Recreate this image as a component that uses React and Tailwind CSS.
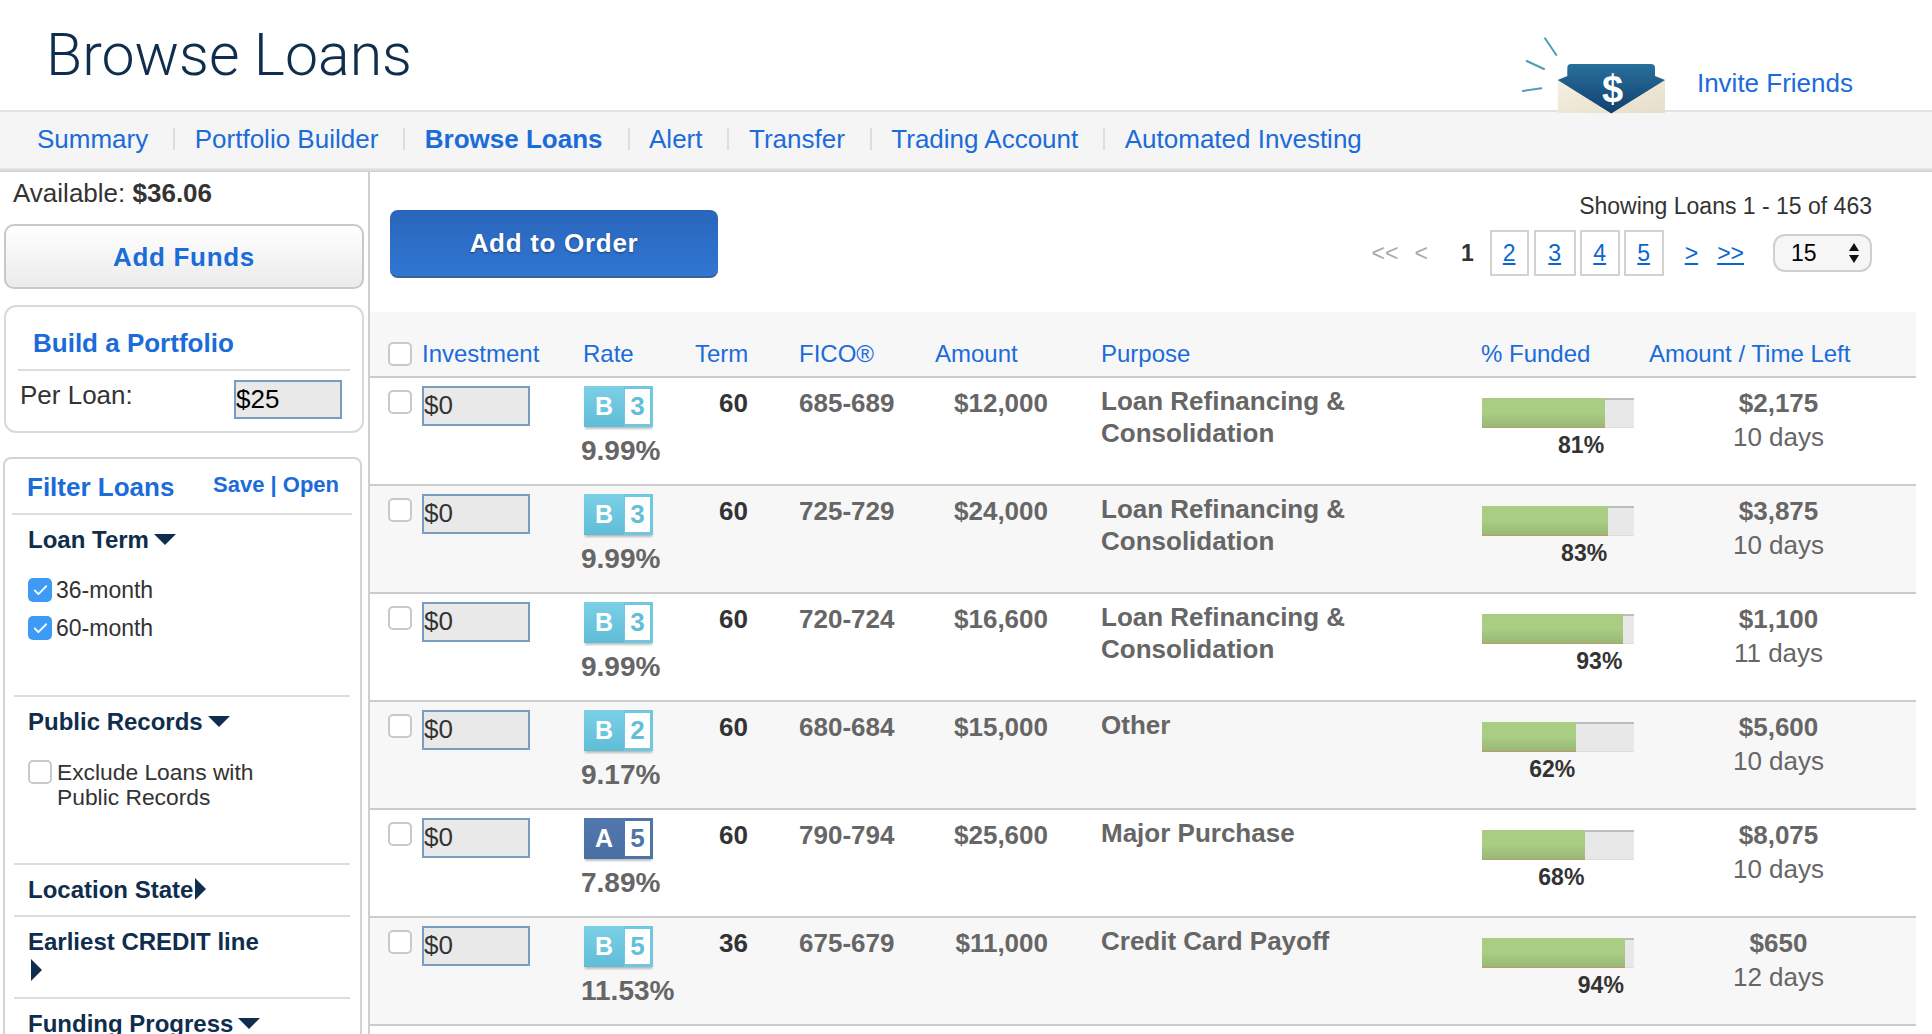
import React from "react";
import { Check } from "lucide-react";

const loans = [
  { grade: "B", sub: 3, rate: "9.99%", term: 60, fico: "685-689", amount: "$12,000", purpose: ["Loan Refinancing &", "Consolidation"], funded: 81, left: "$2,175", time: "10 days" },
  { grade: "B", sub: 3, rate: "9.99%", term: 60, fico: "725-729", amount: "$24,000", purpose: ["Loan Refinancing &", "Consolidation"], funded: 83, left: "$3,875", time: "10 days" },
  { grade: "B", sub: 3, rate: "9.99%", term: 60, fico: "720-724", amount: "$16,600", purpose: ["Loan Refinancing &", "Consolidation"], funded: 93, left: "$1,100", time: "11 days" },
  { grade: "B", sub: 2, rate: "9.17%", term: 60, fico: "680-684", amount: "$15,000", purpose: ["Other"], funded: 62, left: "$5,600", time: "10 days" },
  { grade: "A", sub: 5, rate: "7.89%", term: 60, fico: "790-794", amount: "$25,600", purpose: ["Major Purchase"], funded: 68, left: "$8,075", time: "10 days" },
  { grade: "B", sub: 5, rate: "11.53%", term: 36, fico: "675-679", amount: "$11,000", purpose: ["Credit Card Payoff"], funded: 94, left: "$650", time: "12 days" },
];

const navItems = ["Summary", "Portfolio Builder", "Browse Loans", "Alert", "Transfer", "Trading Account", "Automated Investing"];

const rowGrid = "grid grid-cols-[34px_159px_114px_104px_136px_166px_380px_168px_1fr] pl-[18px]";

function Box({ checked }) {
  if (checked) {
    return (
      <div className="w-6 h-6 shrink-0 rounded-[5px] bg-[#3d9bf6] flex items-center justify-center">
        <Check size={17} strokeWidth={2.5} className="text-white" />
      </div>
    );
  }
  return <div className="w-6 h-6 shrink-0 rounded-[5px] border-2 border-[#c9c9c9] bg-white" />;
}

function CaretDown() {
  return <span className="inline-block ml-[5px] mb-[5px] w-0 h-0 border-l-[11px] border-r-[11px] border-t-[11px] border-l-transparent border-r-transparent border-t-[#0f2d4d] align-middle" />;
}

function CaretRight({ className }) {
  return <span className={`inline-block w-0 h-0 border-t-[11px] border-b-[11px] border-l-[11px] border-t-transparent border-b-transparent border-l-[#0f2d4d] ${className}`} />;
}

function GradeBadge({ grade, sub }) {
  const isA = grade === "A";
  return (
    <div className="flex w-[69px] h-[41px] ml-[3px] shadow-[0_3px_2px_-1px_rgba(0,0,0,0.25)]">
      <div className={`w-[40px] flex items-center justify-center text-white font-bold text-[25px] ${isA ? "bg-gradient-to-b from-[#5177ad] to-[#4a6fa3]" : "bg-gradient-to-b from-[#7bd0e6] to-[#5fbdd7]"}`}>
        {grade}
      </div>
      <div className={`w-[29px] border-[3px] border-l-[1px] bg-white flex items-center justify-center font-bold text-[26px] ${isA ? "border-[#4f74a8] text-[#4f74a8]" : "border-[#6fc8e0] text-[#62bfd9]"}`}>
        {sub}
      </div>
    </div>
  );
}

function LoanRow({ loan, shaded }) {
  return (
    <div className={`${rowGrid} h-[108px] border-b-2 border-[#cccccc] ${shaded ? "bg-[#f7f7f7]" : "bg-white"}`}>
      <div className="pt-3"><Box /></div>
      <div className="pt-2">
        <input readOnly value="$0" className="block w-[108px] h-10 border-2 border-[#7a9cbf] bg-[#e9e9e9] text-[26px] text-[#333] pb-[2px] outline-none" />
      </div>
      <div className="pt-2">
        <GradeBadge grade={loan.grade} sub={loan.sub} />
        <div className="mt-[9px] text-[28px] leading-[30px] font-bold text-[#666]">{loan.rate}</div>
      </div>
      <div className="pt-[10px] pl-6 text-[26px] leading-[30px] font-bold text-[#333]">{loan.term}</div>
      <div className="pt-[10px] text-[26px] leading-[30px] font-bold text-[#666]">{loan.fico}</div>
      <div className="pt-[10px] pr-[53px] text-right text-[26px] leading-[30px] font-bold text-[#666]">{loan.amount}</div>
      <div className="pt-[7px] text-[26px] leading-8 font-bold text-[#666]">
        {loan.purpose.map((line) => <div key={line}>{line}</div>)}
      </div>
      <div className="pt-5">
        <div className="ml-[1px] w-[152px] h-[30px] bg-[#e8e8e8] border-t-2 border-t-[#bdbdbd] border-b border-b-[#dddddd]">
          <div className="h-[30px] -mt-[2px] bg-gradient-to-b from-[#a9cd83] via-[#a9cd83] to-[#98b977] border-b border-b-[#c2996b]" style={{ width: `${loan.funded * 1.52}px` }} />
        </div>
        <div className="text-right text-[23px] leading-7 font-bold text-[#333] mt-[3px]" style={{ width: `${loan.funded * 1.52}px` }}>{loan.funded}%</div>
      </div>
      <div className="pt-2 pr-2 text-center text-[26px] leading-[34px] text-[#666]">
        <div className="font-bold">{loan.left}</div>
        <div>{loan.time}</div>
      </div>
    </div>
  );
}

function InviteIcon() {
  return (
    <svg width="150" height="84" viewBox="0 0 150 84" className="relative z-10 -mb-1 block">
      <defs>
        <linearGradient id="flap" x1="0" y1="0" x2="0" y2="1">
          <stop offset="0" stopColor="#29709c" />
          <stop offset="1" stopColor="#10406f" />
        </linearGradient>
        <linearGradient id="env" x1="0" y1="0" x2="1" y2="1">
          <stop offset="0" stopColor="#f6f0e0" />
          <stop offset="1" stopColor="#e6decb" />
        </linearGradient>
      </defs>
      <g stroke="#4f9db5" strokeWidth="2" strokeLinecap="round">
        <path d="M26 8.3L37.3 25" />
        <path d="M7.7 31L25 39" />
        <path d="M4 61L22.3 58.3" />
      </g>
      <rect x="38.7" y="50" width="107.3" height="33" fill="url(#env)" />
      <path d="M38.7 50L92.3 83.5L146 50L136 46V38Q136 34 132 34H52Q48.3 34 48.3 38V46Z" fill="url(#flap)" />
      <text x="93.5" y="72" textAnchor="middle" fontFamily="Liberation Sans" fontWeight="700" fontSize="38" fill="#ffffff">$</text>
    </svg>
  );
}

export default function App() {
  const sectionTitle = "pt-[10px] text-[24px] leading-[30px] font-bold text-[#0f2d4d]";
  const blue = "text-[#1b6bd9]";
  return (
    <div className="w-[1932px] h-[1034px] overflow-hidden bg-white font-['Liberation_Sans',Arial,sans-serif]">
      {/* header */}
      <div className="h-[112px] border-b-2 border-[#e2e2e2] flex justify-between">
        <h1 className="pl-[46px] pt-[19px] text-[59px] leading-[72px] font-['Roboto',sans-serif] font-light text-[#0f2d4d]">Browse Loans</h1>
        <div className="flex items-end h-[110px] pr-[79px]">
          <InviteIcon />
          <a className={`ml-7 mb-3 text-[26px] leading-[30px] ${blue}`}>Invite Friends</a>
        </div>
      </div>

      {/* tabs */}
      <div className="h-[56px] bg-[#f5f5f5] flex items-center pl-[37px] pb-[2px] text-[26px]">
        {navItems.map((item, i) => (
          <React.Fragment key={item}>
            {i > 0 && <span className="w-[2px] h-[22px] bg-[#dddddd] ml-[25px] mr-[19.5px]" />}
            <a className={`${blue} ${item === "Browse Loans" ? "font-bold" : ""}`}>{item}</a>
          </React.Fragment>
        ))}
      </div>
      <div className="h-1 bg-gradient-to-b from-[#e8e8e8] to-[#cfcfcf]" />

      <div className="flex">
        {/* sidebar */}
        <aside className="w-[370px] shrink-0 h-[862px] border-r-2 border-[#cfcfcf]">
          <div className="h-[42px] flex items-center pl-[13px] text-[26px] text-[#333]">
            <span>Available:&nbsp;<b>$36.06</b></span>
          </div>
          <button className="block ml-1 mt-[10px] pt-[2px] w-[360px] h-[65px] rounded-[10px] border-2 border-[#c8c8c8] bg-gradient-to-b from-white to-[#ebebeb] text-[26px] font-bold tracking-[0.7px] text-[#1b6bd9]">
            Add Funds
          </button>

          <div className="ml-1 mt-4 w-[360px] h-[128px] rounded-[12px] border-2 border-[#dadada]">
            <div className={`mx-3 h-[64px] pt-[10px] pl-[15px] flex items-center border-b-2 border-[#dddddd] text-[26px] font-bold ${blue}`}>
              Build a Portfolio
            </div>
            <div className="mx-3 pt-[9px] pl-[2px] pr-2 flex justify-between text-[26px] leading-[30px] text-[#333]">
              <span>Per Loan:</span>
              <input readOnly value="$25" className="w-[108px] h-[39px] border-2 border-[#7a9cbf] bg-[#e9e9e9] text-[26px] text-black outline-none" />
            </div>
          </div>

          <div className="ml-[3px] mt-6 w-[359px] h-[600px] rounded-t-lg border-2 border-[#d4d4d4]">
            <div className="ml-[7px] w-[340px] h-[56px] pl-[15px] pr-[13px] flex items-center justify-between border-b-2 border-[#dddddd]">
              <span className={`text-[26px] font-bold pt-[2px] ${blue}`}>Filter Loans</span>
              <span className={`text-[22px] font-bold -mt-1 ${blue}`}>Save | Open</span>
            </div>

            <div className="ml-[9px] w-[336px]">
              <div className="h-[182px] pl-[14px] border-b-2 border-[#dddddd]">
                <div className={sectionTitle}>Loan Term<CaretDown /></div>
                <div className="mt-[20px] flex flex-col gap-2 text-[23px] leading-[30px] text-[#333]">
                  <div className="flex items-center gap-1"><Box checked />36-month</div>
                  <div className="flex items-center gap-1"><Box checked />60-month</div>
                </div>
              </div>
              <div className="h-[168px] pl-[14px] border-b-2 border-[#dddddd]">
                <div className={sectionTitle}>Public Records<CaretDown /></div>
                <div className="mt-[23px] flex gap-[5px] text-[22.8px] leading-[25px] text-[#333]">
                  <div><Box /></div>
                  <div>Exclude Loans with<br />Public Records</div>
                </div>
              </div>
              <div className="h-[52px] pl-[14px] border-b-2 border-[#dddddd]">
                <div className={sectionTitle}>Location State<CaretRight className="ml-[2px] -mb-[2px]" /></div>
              </div>
              <div className="h-[82px] pl-[14px] border-b-2 border-[#dddddd]">
                <div className={sectionTitle}>Earliest CREDIT line</div>
                <CaretRight className="block ml-[3px] mt-[2px]" />
              </div>
              <div className="pl-[14px]">
                <div className={sectionTitle}>Funding Progress<CaretDown /></div>
              </div>
            </div>
          </div>
        </aside>

        {/* loans */}
        <main className="flex-1 min-w-0">
          <div className="h-[140px] flex justify-between pl-5 pr-[60px]">
            <button className="mt-[38px] w-[328px] h-[68px] rounded-lg border-b-2 border-[#3f5f8c] bg-gradient-to-b from-[#2966ba] to-[#3076d4] text-white text-[26px] font-bold tracking-[0.7px] [text-shadow:0_1px_2px_rgba(0,0,0,0.4)]">
              Add to Order
            </button>
            <div className="pt-[19px]">
              <div className="text-right text-[23px] leading-[30px] text-[#333]">Showing Loans 1 - 15 of 463</div>
              <div className="mt-[9px] flex items-center justify-end text-[23px]">
                <span className="text-[#aaaaaa]">&lt;&lt;</span>
                <span className="text-[#aaaaaa] ml-4">&lt;</span>
                <span className="text-[#333] font-bold ml-[33px]">1</span>
                {[[2, "w-[39px] ml-4"], [3, "w-[42px] ml-[5px]"], [4, "w-10 ml-1"], [5, "w-10 ml-1"]].map(([n, cls]) => (
                  <a key={n} className={`${cls} h-[46px] border-2 border-[#d2d2d2] flex items-center justify-center underline text-[#0b66cf]`}>{n}</a>
                ))}
                <a className="ml-[21px] underline text-[#0b66cf]">&gt;</a>
                <a className="ml-[19px] underline text-[#0b66cf]">&gt;&gt;</a>
                <div className="ml-[29px] w-[99px] h-[38px] rounded-xl border-2 border-[#cfcfcf] bg-[#f6f6f6] flex items-center justify-between pl-4 pr-[10px] text-[23px] text-black">
                  15
                  <svg width="12" height="24" viewBox="0 0 12 24" fill="#111"><path d="M6 2L11 10H1Z" /><path d="M6 22L1 14H11Z" /></svg>
                </div>
              </div>
            </div>
          </div>

          <div className="w-[1546px]">
            <div className={`${rowGrid} h-[66px] bg-[#f7f7f7] border-b-2 border-[#cccccc] text-[24px] leading-[30px] pt-[27px] ${blue}`}>
              <div className="pt-[3px]"><Box /></div>
              <div>Investment</div>
              <div className="pl-[2px]">Rate</div>
              <div>Term</div>
              <div>FICO®</div>
              <div>Amount</div>
              <div>Purpose</div>
              <div>% Funded</div>
              <div>Amount / Time Left</div>
            </div>
            {loans.map((loan, i) => (
              <LoanRow key={loan.fico} loan={loan} shaded={i % 2 === 1} />
            ))}
          </div>
        </main>
      </div>
    </div>
  );
}
